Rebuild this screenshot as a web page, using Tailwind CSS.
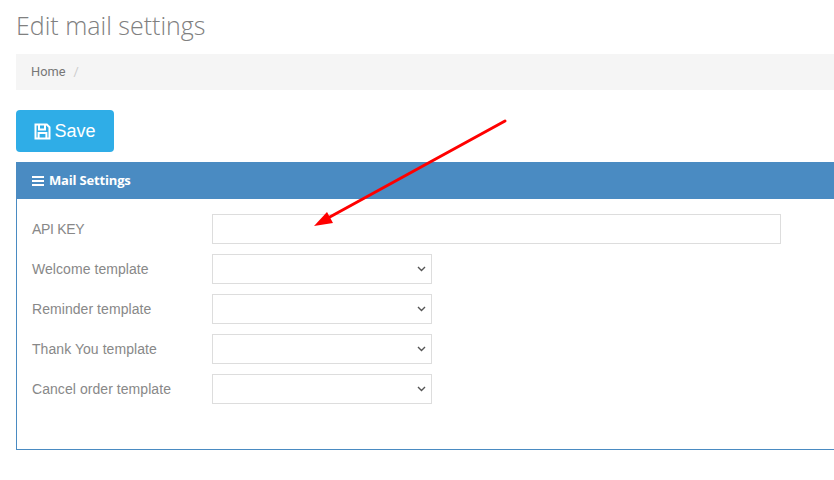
<!DOCTYPE html>
<html lang="en">
  <head>
    <meta charset="UTF-8" />
    <title>Edit mail settings</title>
    <script src="https://cdn.jsdelivr.net/npm/@tailwindcss/browser@4"></script>
  </head>
  <body class="bg-white overflow-hidden w-[834px] h-[480px] relative font-['Liberation_Sans',sans-serif]">
    <div class="pl-4 w-[834px]">
      <h1 class="h-[54px] pt-[6px] text-[25px] leading-[38px] font-light text-[#808080] font-['Open_Sans',sans-serif]">Edit mail settings</h1>

      <!-- breadcrumb -->
      <div class="h-9 bg-[#f5f5f5] pl-[15px] flex items-center gap-2 text-[12.8px] font-['Roboto',sans-serif]">
        <span class="text-[#777]">Home</span>
        <span class="text-[#ccc]">/</span>
      </div>

      <button class="mt-5 w-[98px] h-[42px] rounded bg-[#2fade7] text-white flex items-center justify-center gap-[3px] text-[18px]">
        <svg class="w-[17px] h-[17px]" viewBox="0 0 17 17" fill="none" stroke="currentColor" stroke-width="2">
          <path d="M1.5 1.5h11.3l2.7 2.7v11.3H1.5z" />
          <path d="M5 2v4.4h6V2" />
          <path d="M4.6 15v-5h7.8v5" />
        </svg>
        Save
      </button>

      <!-- panel -->
      <div class="mt-[10px] h-[288px] border-l border-b border-[#4a8bc2]">
        <div class="h-[37px] -ml-px bg-[#4a8bc2] text-white flex items-center pl-4 gap-[5px] text-[13px] font-bold tracking-[-0.17px] font-['Open_Sans',sans-serif]">
          <svg class="w-3 h-3" viewBox="0 0 12 12" fill="currentColor">
            <rect x="0" y="1" width="12" height="2" />
            <rect x="0" y="5" width="12" height="2" />
            <rect x="0" y="9" width="12" height="2" />
          </svg>
          <span class="pt-px">Mail Settings</span>
        </div>
        <div class="pt-[15px] pl-[15px] flex flex-col gap-[10px] text-[14px] tracking-[0.06px] text-[#888]">
          <div class="flex items-center h-[30px]">
            <label class="w-[180px] tracking-[-0.3px]">API KEY</label>
            <input type="text" class="w-[569px] h-[30px] border border-[#ddd] bg-white" />
          </div>
          <div class="flex items-center h-[30px]">
            <label class="w-[180px]">Welcome template</label>
            <div class="relative">
              <select class="block appearance-none w-[220px] h-[30px] border border-[#ddd] bg-white text-[#555]"></select>
              <svg class="absolute right-[6px] top-[12px] w-[9px] h-[6px]" viewBox="0 0 9 6" fill="none" stroke="#555" stroke-width="1.4"><path d="M1 1l3.5 3.5L8 1" /></svg>
            </div>
          </div>
          <div class="flex items-center h-[30px]">
            <label class="w-[180px]">Reminder template</label>
            <div class="relative">
              <select class="block appearance-none w-[220px] h-[30px] border border-[#ddd] bg-white text-[#555]"></select>
              <svg class="absolute right-[6px] top-[12px] w-[9px] h-[6px]" viewBox="0 0 9 6" fill="none" stroke="#555" stroke-width="1.4"><path d="M1 1l3.5 3.5L8 1" /></svg>
            </div>
          </div>
          <div class="flex items-center h-[30px]">
            <label class="w-[180px]">Thank You template</label>
            <div class="relative">
              <select class="block appearance-none w-[220px] h-[30px] border border-[#ddd] bg-white text-[#555]"></select>
              <svg class="absolute right-[6px] top-[12px] w-[9px] h-[6px]" viewBox="0 0 9 6" fill="none" stroke="#555" stroke-width="1.4"><path d="M1 1l3.5 3.5L8 1" /></svg>
            </div>
          </div>
          <div class="flex items-center h-[30px]">
            <label class="w-[180px]">Cancel order template</label>
            <div class="relative">
              <select class="block appearance-none w-[220px] h-[30px] border border-[#ddd] bg-white text-[#555]"></select>
              <svg class="absolute right-[6px] top-[12px] w-[9px] h-[6px]" viewBox="0 0 9 6" fill="none" stroke="#555" stroke-width="1.4"><path d="M1 1l3.5 3.5L8 1" /></svg>
            </div>
          </div>
        </div>
      </div>
    </div>

    <!-- annotation arrow drawn over the page -->
    <svg class="absolute left-0 top-0 pointer-events-none" width="834" height="480" viewBox="0 0 834 480">
      <line x1="505" y1="121" x2="328" y2="218" stroke="#ff0000" stroke-width="3" stroke-linecap="round" />
      <polygon points="314,226 327,212 333,223" fill="#ff0000" />
    </svg>
  </body>
</html>
